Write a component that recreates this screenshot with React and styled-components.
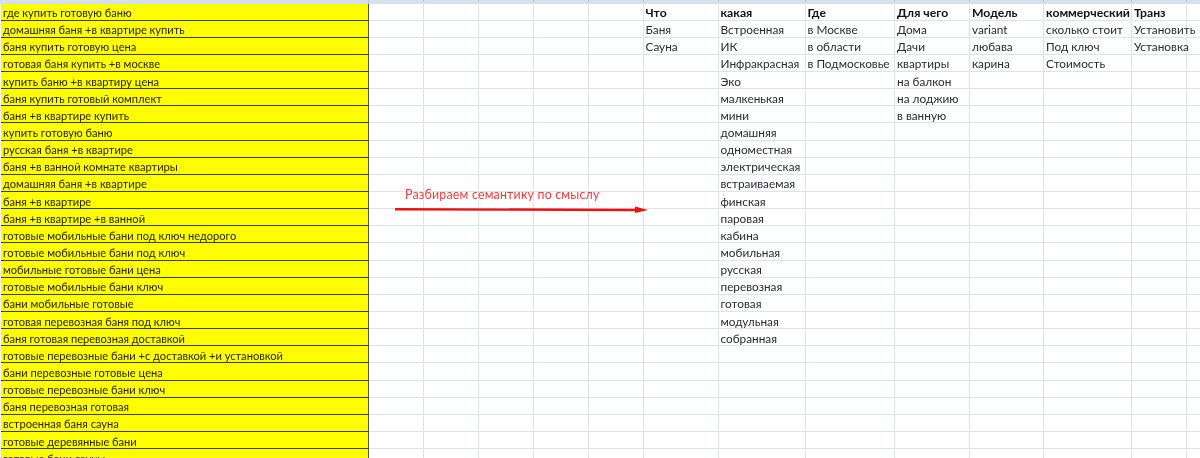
import React from "react";
import styled, { createGlobalStyle } from "styled-components";

const keywords = [
  "где купить готовую баню",
  "домашняя баня +в квартире купить",
  "баня купить готовую цена",
  "готовая баня купить +в москве",
  "купить баню +в квартиру цена",
  "баня купить готовый комплект",
  "баня +в квартире купить",
  "купить готовую баню",
  "русская баня +в квартире",
  "баня +в ванной комнате квартиры",
  "домашняя баня +в квартире",
  "баня +в квартире",
  "баня +в квартире +в ванной",
  "готовые мобильные бани под ключ недорого",
  "готовые мобильные бани под ключ",
  "мобильные готовые бани цена",
  "готовые мобильные бани ключ",
  "бани мобильные готовые",
  "готовая перевозная баня под ключ",
  "баня готовая перевозная доставкой",
  "готовые перевозные бани +с доставкой +и установкой",
  "бани перевозные готовые цена",
  "готовые перевозные бани ключ",
  "баня перевозная готовая",
  "встроенная баня сауна",
  "готовые деревянные бани",
  "готовые бани сауны",
];

// columns of the right-hand table, the first entry is the bold header
const columns = [
  [],
  [],
  [],
  [],
  [],
  ["Что", "Баня", "Сауна"],
  ["какая", "Встроенная", "ИК", "Инфракрасная", "Эко", "малкенькая", "мини", "домашняя", "одноместная", "электрическая", "встраиваемая", "финская", "паровая", "кабина", "мобильная", "русская", "перевозная", "готовая", "модульная", "собранная"],
  ["Где", "в Москве", "в области", "в Подмосковье"],
  ["Для чего", "Дома", "Дачи", "квартиры", "на балкон", "на лоджию", "в ванную"],
  ["Модель", "variant", "любава", "карина"],
  ["коммерческий", "сколько стоит", "Под ключ", "Стоимость"],
  ["Транз", "Установить", "Установка"],
  [],
  [],
];

const gridColumns = "368.5px 55px 55px 55px 55px 55px 75px 87px 89.5px 75px 74px 88px 55px 13.5px";

const GlobalStyle = createGlobalStyle`
  html, body {
    margin: 0;
    padding: 0;
    height: 458px;
    overflow: hidden;
    background: #fff;
  }
`;

const Sheet = styled.div`
  position: relative;
  width: 1200px;
  height: 458px;
  overflow: hidden;
  font-family: Lato, "Open Sans", "Liberation Sans", sans-serif;
  filter: blur(0.45px);
`;

const HeaderStrip = styled.div`
  display: grid;
  grid-template-columns: ${gridColumns};
  height: 3.5px;
  background: #d6e1ef;
`;

const HeaderCell = styled.div`
  border-right: 1px solid #b4c4d8;
`;

const Row = styled.div`
  display: grid;
  grid-template-columns: ${gridColumns};
  grid-template-rows: 17.15px;
  height: 17.15px;
`;

const Keyword = styled.div`
  box-sizing: border-box;
  margin-left: 1px;
  background: #ffff00;
  border-bottom: 1px solid #3f3f10;
  border-right: 1.5px solid #55554a;
  padding: 3.5px 0 0 2px;
  font-size: 11.1px;
  line-height: 12px;
  color: #26260a;
  white-space: nowrap;
`;

const Cell = styled.div`
  box-sizing: border-box;
  border-bottom: 1px solid #dde2ec;
  border-right: 1px solid #dde2ec;
  padding: 3.5px 0 0 2px;
  font-size: ${(p) => (p.$bold ? "12.2px" : "11.8px")};
  line-height: 12px;
  white-space: nowrap;
  font-weight: ${(p) => (p.$bold ? 700 : 400)};
  color: ${(p) => (p.$bold ? "#111" : "#2b2b2b")};
`;

const ArrowNote = styled.div`
  position: absolute;
  left: 395px;
  top: 186px;
  width: 254px;
`;

const NoteText = styled.div`
  margin-left: 10px;
  font-size: 12.4px;
  line-height: 18px;
  letter-spacing: 0.2px;
  color: #ff3a3a;
`;

const Arrow = () => (
  <svg width="254" height="10" viewBox="0 0 254 10" style={{ display: "block", marginTop: 1 }}>
    <path d="M0 4.2 L241 5" stroke="#f01010" strokeWidth="2.4" fill="none" />
    <path d="M240 1.5 L253 5 L240 8 Z" fill="#f01010" />
  </svg>
);

export default function App() {
  return (
    <>
      <GlobalStyle />
      <Sheet>
        <HeaderStrip>
          <HeaderCell />
          {columns.map((_, c) => (
            <HeaderCell key={c} />
          ))}
        </HeaderStrip>
        {keywords.map((text, i) => (
          <Row key={text}>
            <Keyword>{text}</Keyword>
            {columns.map((col, c) => (
              <Cell key={c} $bold={i === 0}>
                {col[i]}
              </Cell>
            ))}
          </Row>
        ))}
        <ArrowNote>
          <NoteText>Разбираем семантику по смыслу</NoteText>
          <Arrow />
        </ArrowNote>
      </Sheet>
    </>
  );
}
